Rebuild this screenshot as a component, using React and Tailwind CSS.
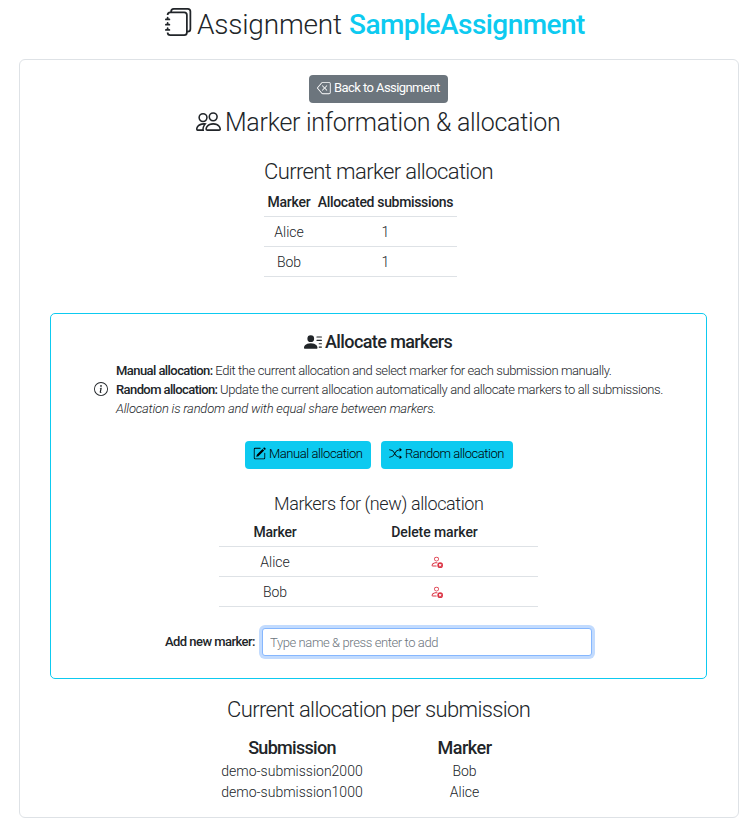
import {
  BsBackspace,
  BsInfoCircle,
  BsJournals,
  BsPencilSquare,
  BsPeople,
  BsPersonLinesFill,
  BsPersonX,
  BsShuffle,
} from 'react-icons/bs'

const markers = [
  { name: 'Alice', allocated: 1 },
  { name: 'Bob', allocated: 1 },
]

const submissions = [
  { name: 'demo-submission2000', marker: 'Bob' },
  { name: 'demo-submission1000', marker: 'Alice' },
]

export default function App() {
  return (
    <div className="h-[826px] w-[752px] overflow-hidden bg-white font-['Roboto',sans-serif] text-sm font-light text-[#212529] whitespace-nowrap">

      {/* Page title */}
      <h1 className="ml-[165px] flex h-[48px] items-center pt-px text-[28px]">
        <BsJournals size={28} className="mb-[5px] shrink-0" />
        <span className="ml-1 w-[152px] tracking-[-0.2px]">Assignment</span>
        <span className="font-medium tracking-[-0.55px] text-[#0dcaf0]">SampleAssignment</span>
      </h1>

      <main className="mt-[11px] ml-[19px] h-[759px] w-[720px] rounded-md border border-[#dee2e6]">
        <div className="mt-[15px] ml-[289px]">
          <button className="flex h-7 w-[139px] items-center rounded bg-[#6c757d] pb-0.5 pl-2 text-[13px] font-normal text-white">
            <BsBackspace size={14} className="shrink-0" />
            <span className="ml-[3px] tracking-[-0.57px]">Back to Assignment</span>
          </button>
        </div>

        <h2 className="ml-[176px] flex h-[38px] items-center text-[25px]">
          <BsPeople size={25} className="mb-px shrink-0" />
          <span className="ml-1 pt-0.5 tracking-[-0.27px]">Marker information &amp; allocation</span>
        </h2>

        {/* Current allocation */}
        <section className="mt-[14px] ml-[244px]">
          <h3 className="flex h-[34px] items-center text-[22px] tracking-[-0.6px]">Current marker allocation</h3>
          <table className="w-[193px] table-fixed border-collapse text-center">
            <thead>
              <tr className="h-[27px] border-b border-[#dee2e6]">
                <th className="w-[50px] p-0 font-medium tracking-[-0.2px]">Marker</th>
                <th className="p-0 font-medium tracking-[-0.33px]">Allocated submissions</th>
              </tr>
            </thead>
            <tbody>
              {markers.map((m) => (
                <tr key={m.name} className="h-[30px] border-b border-[#dee2e6]">
                  <td className="p-0 pt-0.5">{m.name}</td>
                  <td className="p-0 pt-0.5">{m.allocated}</td>
                </tr>
              ))}
            </tbody>
          </table>
        </section>

        {/* Allocate markers */}
        <section className="mt-[36px] ml-[30px] h-[366px] w-[657px] rounded-[5px] border border-[#0dcaf0]">
          <h3 className="mt-[13px] ml-[253px] flex h-[30px] items-center text-[18px] font-medium">
            <BsPersonLinesFill size={18} />
            <span className="ml-[3px] tracking-[-0.6px]">Allocate markers</span>
          </h3>

          <div className="mt-1 ml-[43px] flex items-center text-[13px] leading-[19px]">
            <BsInfoCircle size={14} className="shrink-0" />
            <div className="ml-2">
              <p>
                <b className="font-medium tracking-[-0.57px]">Manual allocation: </b>
                <span className="tracking-[-0.4px]">Edit the current allocation and select marker for each submission manually.</span>
              </p>
              <p>
                <b className="font-medium tracking-[-0.6px]">Random allocation: </b>
                <span className="tracking-[-0.39px]">Update the current allocation automatically and allocate markers to all submissions.</span>
              </p>
              <p className="tracking-[-0.21px] italic">Allocation is random and with equal share between markers.</p>
            </div>
          </div>

          <div className="mt-[23px] ml-[194px] flex gap-[10px] text-[13px] text-black">
            <button className="flex h-7 w-[126px] items-center rounded bg-[#0dcaf0] pb-px pl-2">
              <BsPencilSquare size={13} className="mb-px shrink-0" />
              <span className="ml-[3px] tracking-[-0.43px]">Manual allocation</span>
            </button>
            <button className="flex h-7 w-[132px] items-center rounded bg-[#0dcaf0] pb-px pl-2">
              <BsShuffle size={13} className="mb-px shrink-0" />
              <span className="ml-[3px] tracking-[-0.47px]">Random allocation</span>
            </button>
          </div>

          <h4 className="mt-[21px] ml-[223px] flex h-7 items-center text-[18px] tracking-[-0.4px]">Markers for (new) allocation</h4>
          <table className="ml-[168px] w-[319px] table-fixed border-collapse text-center">
            <thead>
              <tr className="h-[29px] border-b border-[#dee2e6]">
                <th className="w-[112px] p-0 font-medium tracking-[-0.2px]">Marker</th>
                <th className="p-0 font-medium tracking-[-0.1px]">Delete marker</th>
              </tr>
            </thead>
            <tbody>
              {markers.map((m) => (
                <tr key={m.name} className="h-[30px] border-b border-[#dee2e6]">
                  <td className="p-0">{m.name}</td>
                  <td className="p-0">
                    <BsPersonX size={13} className="ml-[99px] text-[#dc3545]" />
                  </td>
                </tr>
              ))}
            </tbody>
          </table>

          <div className="mt-[21px] ml-[114px] flex items-center text-[13px]">
            <label className="w-[97px] font-medium tracking-[-0.55px]">Add new marker:</label>
            <input
              className="h-[28px] w-[330px] rounded-[3px] border border-[#86b7fe] bg-white px-[7px] text-[13px] font-light tracking-[-0.4px] shadow-[0_0_0_3px_#c2dbfe] outline-none placeholder:text-[#6c757d]"
              placeholder="Type name & press enter to add"
            />
          </div>
        </section>

        {/* Allocation per submission */}
        <section className="mt-[14px]">
          <h3 className="ml-[207px] flex h-[34px] items-center text-[22px] tracking-[-0.62px]">Current allocation per submission</h3>
          <table className="mt-1 ml-[186px] w-[345px] table-fixed border-collapse text-center">
            <thead>
              <tr className="h-[30px] text-[18px]">
                <th className="w-[172px] p-0 pt-[3px] leading-[27px] font-medium tracking-[-0.7px]">Submission</th>
                <th className="p-0 pt-[3px] leading-[27px] font-medium tracking-[-0.5px]">Marker</th>
              </tr>
            </thead>
            <tbody>
              {submissions.map((s) => (
                <tr key={s.name} className="h-[21px]">
                  <td className="p-0">{s.name}</td>
                  <td className="p-0">{s.marker}</td>
                </tr>
              ))}
            </tbody>
          </table>
        </section>
      </main>
    </div>
  )
}
